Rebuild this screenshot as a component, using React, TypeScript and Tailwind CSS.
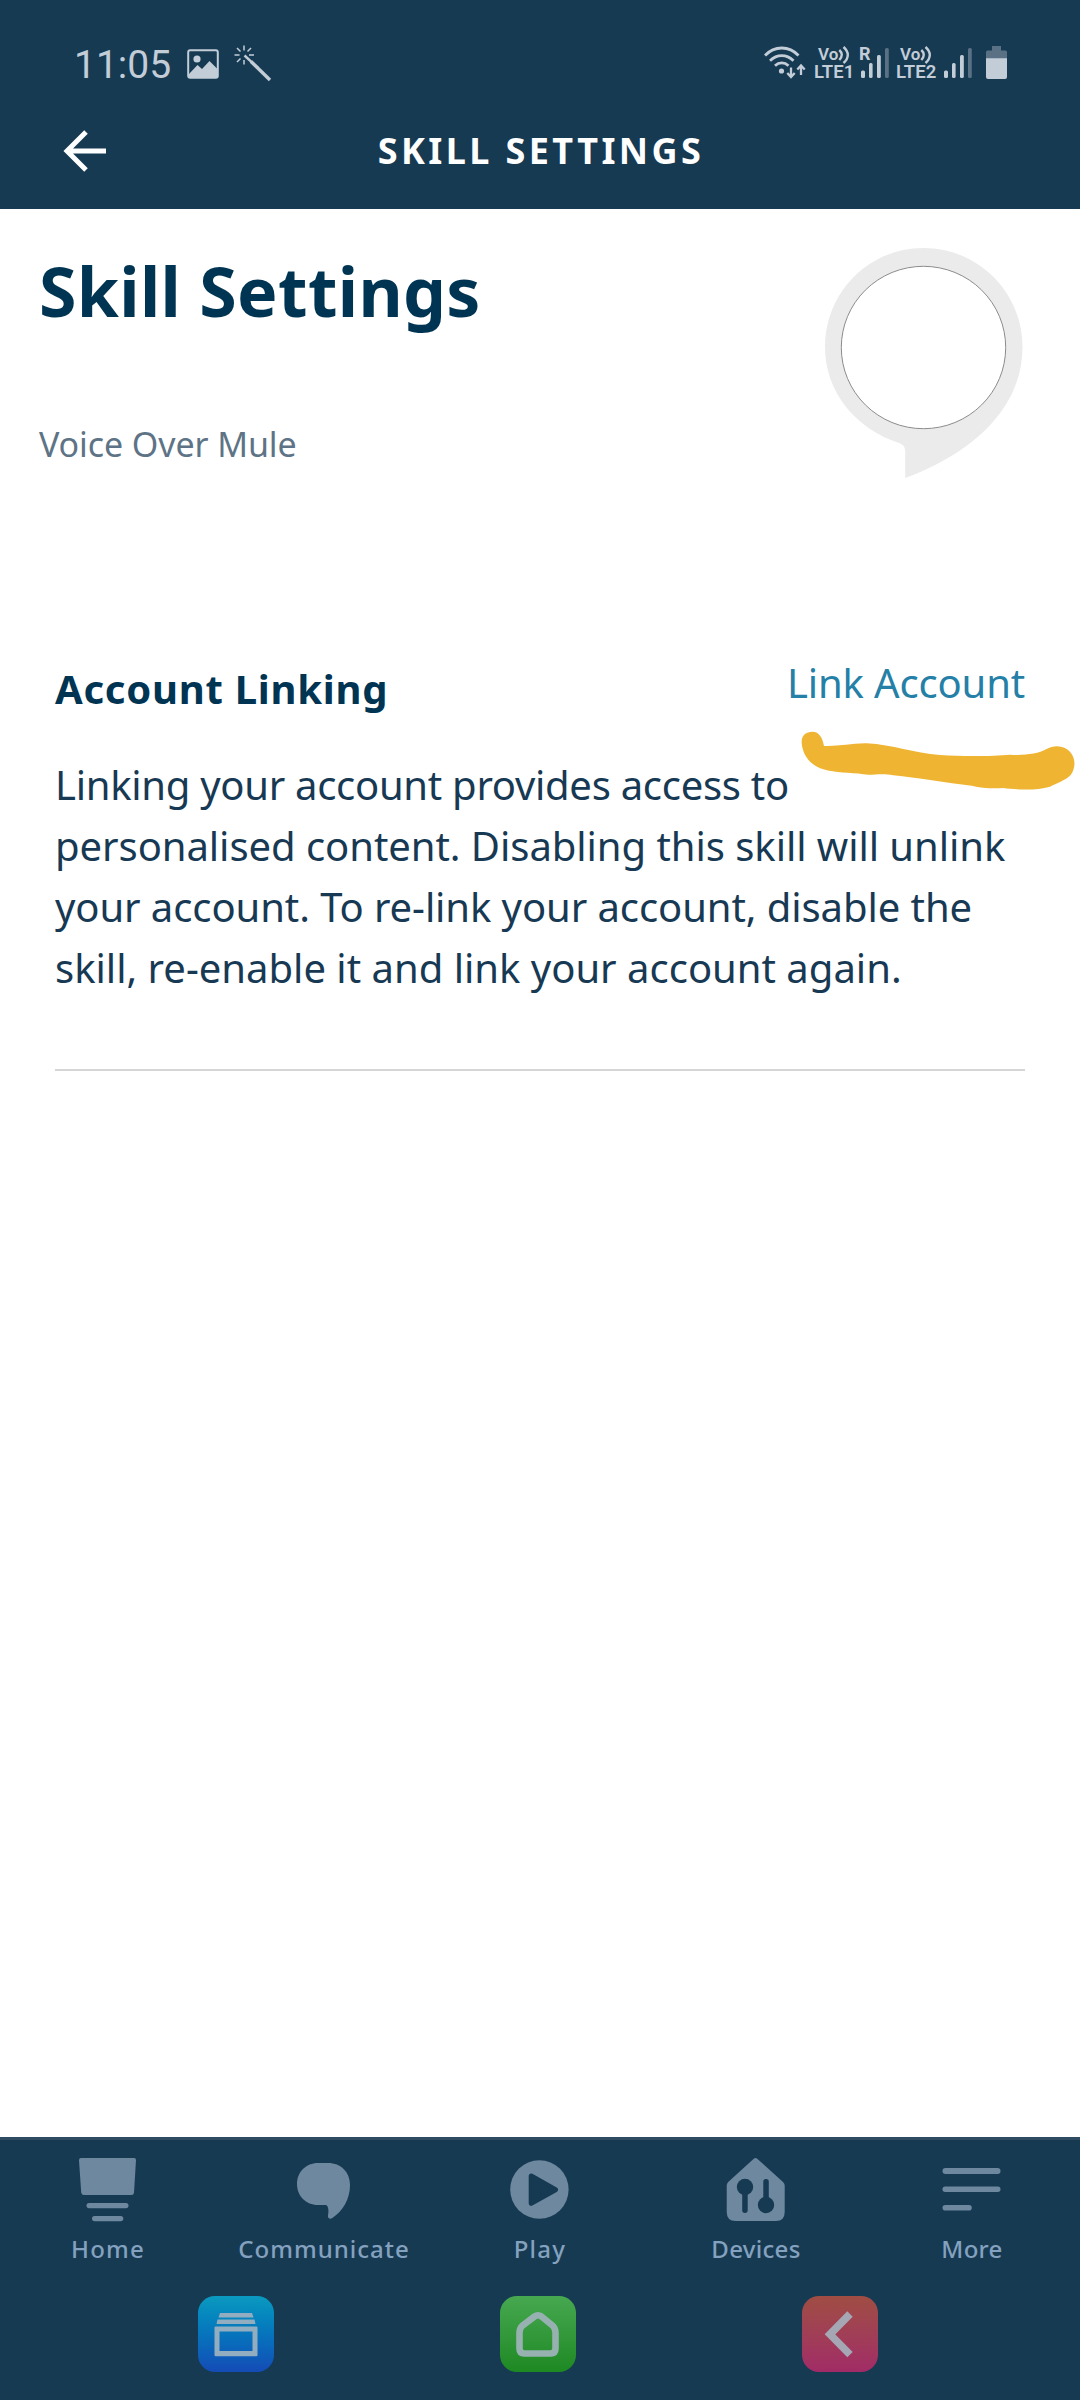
import type { ReactNode } from "react";

function PictureIcon() {
  return (
    <svg className="h-[30px] w-[32px]" viewBox="0 0 32 30">
      <rect x="1.2" y="1.2" width="29.6" height="27.6" rx="2" fill="none" stroke="#c3cdd8" strokeWidth="2" />
      <circle cx="10" cy="10" r="3.6" fill="#c3cdd8" />
      <path d="M2 25 L10.5 16 L15 20 L22.5 12 L30 19.5 V28.5 H2 Z" fill="#c3cdd8" />
    </svg>
  );
}

function WandIcon() {
  return (
    <svg className="h-[38px] w-[38px]" viewBox="0 0 38 38" stroke="#c3cdd8" fill="none">
      <path d="M10 0.5V5.5 M10 15V19.5 M0.5 10H5.5 M15 10H20 M3 3L6.5 6.5 M17 3L13.5 6.5 M3 17L6.5 13.5" strokeWidth="1.5" />
      <path d="M10.5 10.5L24 23" strokeWidth="2.4" />
      <path d="M17 16.5L36 35" strokeWidth="3.4" />
    </svg>
  );
}

function WifiIcon() {
  return (
    <svg className="h-[34px] w-[42px]" viewBox="0 0 42 34" fill="none" stroke="#c3cdd8">
      <path d="M1 9.5C10.5 -0.5 25 -0.5 34.5 9.5" strokeWidth="2.8" />
      <path d="M6 14.8C13 8 22.5 8 29.5 14.8" strokeWidth="2.8" />
      <path d="M11 19.8C15 16 20.5 16 24.5 19.8" strokeWidth="2.8" />
      <circle cx="17.5" cy="25" r="2.6" fill="#c3cdd8" stroke="none" />
      <path d="M27 21.5V31 M23.3 27L27 31L30.7 27 M37 29V19.5 M33.3 23.5L37 19.5L40.7 23.5" strokeWidth="2.3" />
    </svg>
  );
}

function Volte({ line, label }: { line: string; label: string }) {
  return (
    <div className="flex flex-col font-semibold text-[#c3cdd8]" aria-label={label}>
      <div className="flex h-[18px] items-center pl-[4px]">
        <span className="text-[17px] leading-[18px]">Vo</span>
        <svg className="mt-[2px] h-[18px] w-[12px] shrink-0" viewBox="0 0 12 18" fill="none" stroke="#c3cdd8" strokeWidth="2.4">
          <path d="M1.3 4C4.6 7 4.6 10.500 1.3 14 M5.500 1C11.200 6 11.200 12 5.500 17" />
        </svg>
      </div>
      <span className="text-[18.500px] leading-[18px]">{line}</span>
    </div>
  );
}

function SignalBars() {
  return (
    <svg className="h-[30px] w-[28px]" viewBox="0 0 28 30" fill="#c3cdd8">
      <rect x="0" y="22.5" width="4" height="7.5" rx="1.5" />
      <rect x="8" y="15" width="3.6" height="15" rx="1.5" />
      <rect x="16" y="7" width="3.8" height="23" rx="1.5" />
      <rect x="24" y="0" width="3.8" height="30" rx="1.5" fill="#597085" />
    </svg>
  );
}

function BatteryIcon() {
  return (
    <svg className="h-[33px] w-[21px]" viewBox="0 0 21 33">
      <path d="M6 0H15V4.5H19.5Q21 4.5 21 6V13H0V6Q0 4.5 1.5 4.5H6Z" fill="#597085" />
      <path d="M0 12.3H21V31Q21 33 19 33H2Q0 33 0 31Z" fill="#c3cdd8" />
    </svg>
  );
}

function StatusBar() {
  return (
    <div className="flex h-[130px] items-start justify-between font-[Roboto,sans-serif]">
      <div className="flex items-start pl-[74px]">
        <span className="mt-[43px] w-[113px] text-[39px] leading-[44px] whitespace-nowrap text-[#c3cdd8]">11:05</span>
        <div className="mt-[49px]"><PictureIcon /></div>
        <div className="mt-[45px] ml-[15px]"><WandIcon /></div>
      </div>
      <div className="flex items-start pr-[73px]">
        <div className="mt-[46px] mr-[8px]"><WifiIcon /></div>
        <div className="mt-[45px] w-[47px]"><Volte line="LTE1" label="VoLTE 1" /></div>
        <div className="relative mt-[48px] mr-[7px]">
          <SignalBars />
          <span className="absolute top-[-7px] left-[-2px] text-[18px] leading-[25px] font-bold text-[#c3cdd8]">R</span>
        </div>
        <div className="mt-[45px] w-[48px]"><Volte line="LTE2" label="VoLTE 2" /></div>
        <div className="mt-[48px] mr-[14px]"><SignalBars /></div>
        <div className="mt-[46px]"><BatteryIcon /></div>
      </div>
    </div>
  );
}

function TitleBar() {
  return (
    <div className="grid h-[79px] grid-cols-[200px_1fr_200px] items-start">
      <svg className="ml-[63px] h-[44px] w-[44px]" viewBox="0 0 44 44" fill="none" stroke="#fff" strokeWidth="5">
        <path d="M23 1.5L4 20.5L23 39.5 M4 20.5H43" transform="translate(0 0.5)" />
      </svg>
      <h2 className="mt-px h-[40px] pl-[2px] text-center text-[36px] leading-[40px] font-bold tracking-[3.4px] text-white">SKILL SETTINGS</h2>
    </div>
  );
}

function SkillBadge() {
  return (
    <svg className="h-[232px] w-[200px]" viewBox="24 17 200 232">
      <path
        d="M123.5 18C178 18 222.5 62 222.5 117C222.5 180 170 224 105.2 248V221Q105.2 215 99 213C56 199 25 162 25 117C25 62 69 18 123.5 18Z"
        fill="#ebebeb"
      />
      <ellipse cx="123.5" cy="117.5" rx="82.2" ry="81.2" fill="#fff" stroke="#8c8c8c" strokeWidth="1" />
    </svg>
  );
}

function MarkerStroke() {
  return (
    <svg className="pointer-events-none absolute top-[640px] left-[760px] h-[170px] w-[320px]" viewBox="0 0 960 510">
      <path
        d="M125 308C124 286 138 275 157 275C178 275 188 294 192 318C235 320 275 309 320 310C400 314 460 340 540 345C610 350 700 349 750 344C790 347 835 342 858 328C885 312 915 318 930 335C948 355 947 385 932 405C915 422 893 428 870 440C830 452 770 449 730 444C695 446 665 444 635 437C560 430 470 412 400 406C365 398 335 407 310 403C270 397 225 399 190 388C150 376 128 345 125 308Z"
        fill="#efb432"
      />
    </svg>
  );
}

const iconTint = "#6d889f";

function HomeIcon() {
  return (
    <svg className="h-[66px] w-[60px]" viewBox="0 0 60 66" fill={iconTint}>
      <path d="M3 1H56Q58.2 1 58 3.200L56 35.500Q55.800 38 53.500 38H6Q3.500 38 3.200 35.500L1 3.200Q1 1 3 1Z" />
      <rect x="8.500" y="46" width="42" height="5.200" rx="2.600" />
      <rect x="14" y="59" width="31.300" height="5.200" rx="2.600" />
    </svg>
  );
}

function ChatIcon() {
  return (
    <svg className="h-[66px] w-[60px]" viewBox="0 0 60 66" fill={iconTint}>
      <path d="M24 6H34C47 6 56 15 56 28C56 42 49 54 38 61.300C35.500 62.600 33.500 61 34 58.500C35 54 34.500 48.200 31.500 48H24C12 48 3 39 3 27C3 15 12 6 24 6Z" />
    </svg>
  );
}

function PlayIcon() {
  return (
    <svg className="h-[66px] w-[60px]" viewBox="0 0 60 66">
      <circle cx="29.400" cy="32.500" r="29.200" fill={iconTint} />
      <path d="M21.200 19L45.500 32.700L21.200 46.300Z" fill="#173a53" stroke="#173a53" strokeWidth="5" strokeLinejoin="round" />
    </svg>
  );
}

function DevicesIcon() {
  return (
    <svg className="h-[66px] w-[60px]" viewBox="0 0 60 66">
      <path d="M27.500 2Q29.500 0 31.500 2L57 25Q58.700 26.500 58.700 28.500V55Q58.700 64 50 64H9.500Q0.700 64 0.700 55V28.500Q0.700 26.500 2.200 25Z" fill={iconTint} />
      <g fill="#173a53">
        <circle cx="19" cy="30" r="8.200" />
        <rect x="16.200" y="32" width="5.500" height="24" rx="2.700" />
        <circle cx="40" cy="48" r="8.200" />
        <rect x="37.300" y="22" width="5.500" height="24" rx="2.700" />
      </g>
    </svg>
  );
}

function MoreIcon() {
  return (
    <svg className="h-[66px] w-[60px]" viewBox="0 0 60 66" fill={iconTint}>
      <rect x="0.500" y="11" width="58" height="6" rx="3" />
      <rect x="0.500" y="29.600" width="58" height="5.400" rx="2.700" />
      <rect x="0.500" y="48" width="29.300" height="5.600" rx="2.800" />
    </svg>
  );
}

const tabs: { label: string; icon: ReactNode; tracking: string }[] = [
  { label: "Home", icon: <HomeIcon />, tracking: "tracking-[1.2px]" },
  { label: "Communicate", icon: <ChatIcon />, tracking: "tracking-[1px]" },
  { label: "Play", icon: <PlayIcon />, tracking: "tracking-[1.3px]" },
  { label: "Devices", icon: <DevicesIcon />, tracking: "tracking-[0.3px]" },
  { label: "More", icon: <MoreIcon />, tracking: "tracking-[0.3px]" },
];

function TabBar() {
  return (
    <nav className="grid h-[157px] grid-cols-5 border-t-[3px] border-[#2f4c63]">
      {tabs.map((t) => (
        <div key={t.label} className="flex flex-col items-center pt-[17px]">
          {t.icon}
          <span className={`mt-[11px] text-[24px] leading-[30px] font-medium text-[#84a1bf] ${t.tracking}`}>{t.label}</span>
        </div>
      ))}
    </nav>
  );
}

function SystemBar() {
  return (
    <div className="flex justify-center gap-[226px] pt-[2px] pr-[4px]">
      <div className="flex size-[76px] items-center justify-center rounded-[17px] bg-linear-to-b from-[#0b9ac0] to-[#144bb6]">
        <svg className="size-[76px]" viewBox="0 0 76 76" fill="#92adc0">
          <path d="M22 17H54L55.500 21.500H20.500Z" />
          <path d="M19.500 23.500H56.500L57.500 28H18.500Z" />
          <path fillRule="evenodd" d="M17.500 30.500H58.500Q59.500 30.500 59.500 31.500V59Q59.500 60.200 58.500 60.200H17.500Q16.500 60.200 16.500 59V31.500Q16.500 30.500 17.500 30.500ZM21.500 35.500V55H54.500V35.500Z" />
        </svg>
      </div>
      <div className="flex size-[76px] items-center justify-center rounded-[17px] bg-linear-to-b from-[#46a850] to-[#1d8922]">
        <svg className="size-[76px]" viewBox="0 0 76 76" fill="none" stroke="#96b1af" strokeWidth="6.600">
          <path d="M34.500 20.500Q38 18 41.500 20.500L52.500 29.500Q55.500 32 55.500 37V52.500Q55.500 57.500 50.500 57.500H24.500Q19.500 57.500 19.500 52.500V37Q19.500 32 22.500 29.500Z" />
        </svg>
      </div>
      <div className="flex size-[76px] items-center justify-center rounded-[17px] bg-linear-to-b from-[#a04d43] to-[#a12b66]">
        <svg className="size-[76px]" viewBox="0 0 76 76" fill="none" stroke="#a5a7b4" strokeWidth="7.600">
          <path d="M48 18L28 38.300L48 58.600" />
        </svg>
      </div>
    </div>
  );
}

export default function App() {
  return (
    <div className="relative flex h-[2400px] w-[1080px] flex-col bg-white font-['Noto_Sans','Open_Sans',sans-serif]">
      <header className="h-[209px] bg-[#173a53]">
        <StatusBar />
        <TitleBar />
      </header>

      <main className="flex-1">
        <section className="flex items-start justify-between pt-[38px] pr-[56px] pl-[39px]">
          <div>
            <h1 className="mt-[4px] text-[68px] leading-[80px] font-bold tracking-[0.35px] text-[#003453]">Skill Settings</h1>
            <p className="mt-[93px] text-[34px] leading-[40px] tracking-[-0.1px] text-[#5e7486]">Voice Over Mule</p>
          </div>
          <SkillBadge />
        </section>

        <section className="mx-[55px] mt-[179px] border-b-2 border-[#d5d5d5] pb-[71px]">
          <div className="flex items-start justify-between">
            <h3 className="mt-[6px] text-[40px] leading-[50px] font-bold tracking-[0.75px] text-[#003453]">Account Linking</h3>
            <a className="text-[40px] leading-[50px] tracking-[-0.15px] text-[#2580a7]">Link Account</a>
          </div>
          <p className="mt-[40px] text-[40px] leading-[61px] whitespace-nowrap text-[#173953]">
            <span className="block tracking-[-0.28px]">Linking your account provides access to</span>
            <span className="block tracking-[-0.05px]">personalised content. Disabling this skill will unlink</span>
            <span className="block tracking-[-0.08px]">your account. To re-link your account, disable the</span>
            <span className="block">skill, re-enable it and link your account again.</span>
          </p>
        </section>
      </main>

      <footer className="h-[263px] bg-[#173a53]">
        <TabBar />
        <SystemBar />
      </footer>

      <MarkerStroke />
    </div>
  );
}
